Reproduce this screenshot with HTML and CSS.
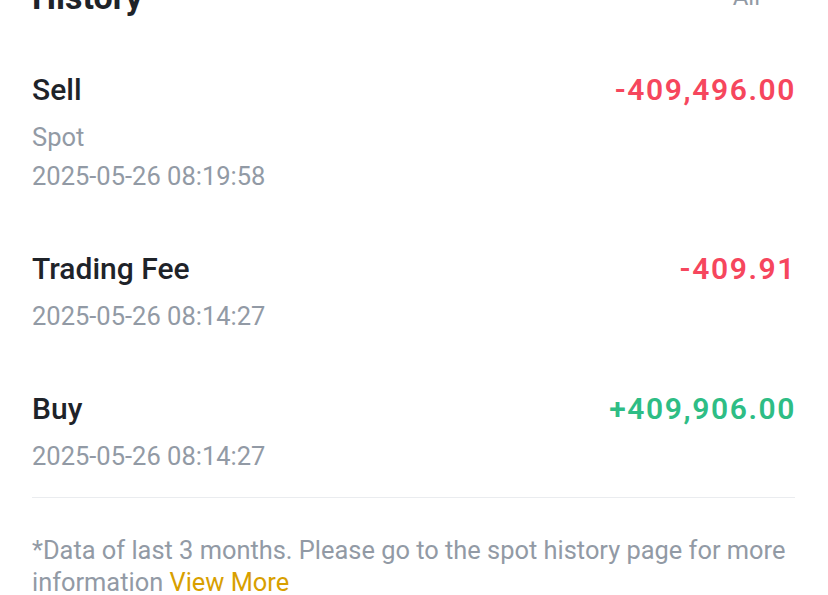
FILE: index.html
```html
<!DOCTYPE html>
<html>
<head>
<meta charset="utf-8">
<link rel="stylesheet" href="styles.css">
</head>
<body>
<div class="page">
  <div class="header">
    <div class="title">History</div>
    <div class="all">All</div>
  </div>
  <div class="list">
    <div class="row">
      <div class="info">
        <div class="name">Sell</div>
        <div class="subs">
          <div class="sub">Spot</div>
          <div class="sub">2025-05-26 08:19:58</div>
        </div>
      </div>
      <div class="amount neg">-409,496.00</div>
    </div>
    <div class="row">
      <div class="info">
        <div class="name">Trading Fee</div>
        <div class="subs">
          <div class="sub">2025-05-26 08:14:27</div>
        </div>
      </div>
      <div class="amount neg">-409.91</div>
    </div>
    <div class="row">
      <div class="info">
        <div class="name">Buy</div>
        <div class="subs">
          <div class="sub">2025-05-26 08:14:27</div>
        </div>
      </div>
      <div class="amount pos">+409,906.00</div>
    </div>
  </div>
  <div class="divider"></div>
  <p class="note">*Data of last 3 months. Please go to the spot history page for more information <span class="link">View More</span></p>
</div>
</body>
</html>
```

FILE: styles.css
```css
html, body {
  margin: 0;
  padding: 0;
  background: #ffffff;
}
body {
  font-family: Roboto, "Noto Sans", sans-serif;
  color: #1E2329;
  overflow: hidden;
}
.page {
  padding: 0 33px 0 32px;
}
.header {
  display: flex;
  justify-content: space-between;
  align-items: center;
  height: 40px;
  margin-top: -23px;
}
.title {
  font-size: 34px;
  font-weight: 700;
  line-height: 40px;
}
.all {
  font-size: 24px;
  line-height: 40px;
  color: #929AA5;
  margin-right: 35px;
}
.list {
  display: flex;
  flex-direction: column;
  padding-top: 53px;
}
.row {
  display: flex;
  justify-content: space-between;
  align-items: flex-start;
  padding-bottom: 53px;
}
.row:last-child {
  padding-bottom: 21px;
}
.name {
  font-size: 30px;
  font-weight: 500;
  line-height: 40px;
}
.subs {
  margin-top: 8px;
}
.sub {
  font-size: 25.5px;
  line-height: 39px;
  color: #929AA5;
}
.amount {
  font-size: 30px;
  font-weight: 600;
  line-height: 40px;
  letter-spacing: 1.6px;
  margin-right: -1px;
}
.neg { color: #F6465D; }
.pos { color: #2EBD85; }
.divider {
  height: 1px;
  background: #EAECEF;
}
.note {
  margin: 36px 0 0;
  font-size: 25.4px;
  line-height: 32px;
  color: #929AA5;
}
.link {
  color: #D89F00;
}
```
